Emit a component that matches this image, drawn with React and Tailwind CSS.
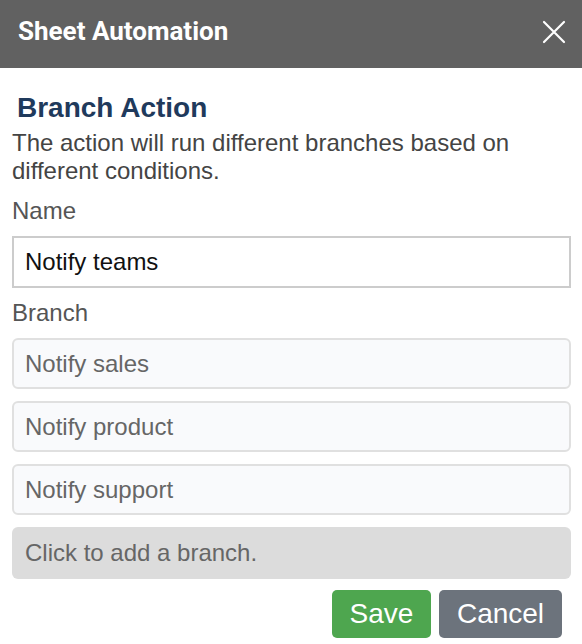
export default function App() {
  const branches = ["Notify sales", "Notify product", "Notify support"];

  return (
    <div className="w-[582px] h-[644px] bg-white overflow-hidden" style={{ fontFamily: '"Liberation Sans", Arial, sans-serif' }}>
      <header className="h-[68px] bg-[#616161] flex items-center justify-between pl-[18px] pr-[14px] pb-[5px]">
        <h1 className="text-white text-[26px] font-bold" style={{ fontFamily: "Roboto, sans-serif" }}>
          Sheet Automation
        </h1>
        <button className="text-white w-[28px] h-[28px] flex items-center justify-center">
          <svg width="24" height="24" viewBox="0 0 24 24" fill="none" stroke="currentColor" strokeWidth="2.2" strokeLinecap="round">
            <path d="M2 2L22 22M22 2L2 22" />
          </svg>
        </button>
      </header>

      <div className="pl-[12px] pr-[11px] pt-[24px]">
        <h2 className="text-[28px] font-bold text-[#1f3a5c] leading-[32px] pl-[5px]">Branch Action</h2>
        <p className="text-[24px] leading-[28px] text-[#444] mt-[5px]">
          The action will run different branches based on different conditions.
        </p>
        <label className="block text-[24px] leading-[28px] text-[#555] mt-[12px]">Name</label>
        <input
          defaultValue="Notify teams"
          className="mt-[11px] w-full h-[52px] border-2 border-[#ccc] px-[11px] text-[24px] text-[#111] outline-none"
        />
        <div className="text-[24px] leading-[28px] text-[#555] mt-[11px]">Branch</div>
        <div className="mt-[11px] flex flex-col gap-[12px]">
          {branches.map((b) => (
            <div key={b} className="h-[51px] rounded-[6px] border-2 border-[#e0e0e0] bg-[#f9fafc] px-[11px] flex items-center text-[24px] text-[#666]">
              {b}
            </div>
          ))}
          <div className="h-[52px] rounded-[6px] bg-[#dcdcdc] px-[13px] flex items-center text-[24px] text-[#666]">
            Click to add a branch.
          </div>
        </div>
        <div className="flex justify-end gap-[8px] mt-[11px] pr-[9px]">
          <button className="w-[99px] h-[48px] rounded-[5px] bg-[#4ea64f] text-white text-[28px]">Save</button>
          <button className="w-[123px] h-[48px] rounded-[5px] bg-[#6c737c] text-white text-[28px]">Cancel</button>
        </div>
      </div>
    </div>
  );
}
